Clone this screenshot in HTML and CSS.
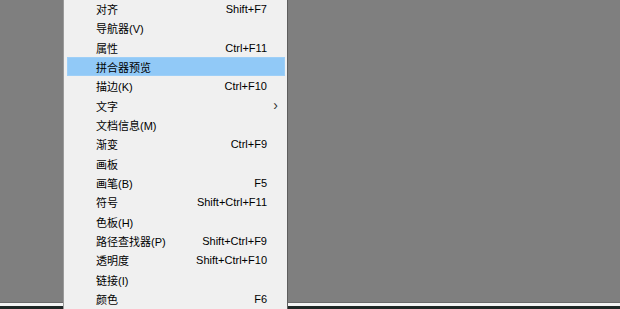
FILE: index.html
```html
<!DOCTYPE html>
<html>
<head>
<meta charset="utf-8">
<link rel="stylesheet" href="styles.css">
</head>
<body>
<div class="desktop">
  <div class="workspace"></div>
  <div class="taskbar"></div>
</div>
<ul class="menu">
  <li class="item"><span class="label">对齐</span><span class="key">Shift+F7</span></li>
  <li class="item"><span class="label">导航器(V)</span><span class="key"></span></li>
  <li class="item"><span class="label">属性</span><span class="key">Ctrl+F11</span></li>
  <li class="item active"><span class="label">拼合器预览</span><span class="key"></span></li>
  <li class="item"><span class="label">描边(K)</span><span class="key">Ctrl+F10</span></li>
  <li class="item"><span class="label">文字</span><span class="key"></span><span class="arrow">›</span></li>
  <li class="item"><span class="label">文档信息(M)</span><span class="key"></span></li>
  <li class="item"><span class="label">渐变</span><span class="key">Ctrl+F9</span></li>
  <li class="item"><span class="label">画板</span><span class="key"></span></li>
  <li class="item"><span class="label">画笔(B)</span><span class="key">F5</span></li>
  <li class="item"><span class="label">符号</span><span class="key">Shift+Ctrl+F11</span></li>
  <li class="item"><span class="label">色板(H)</span><span class="key"></span></li>
  <li class="item"><span class="label">路径查找器(P)</span><span class="key">Shift+Ctrl+F9</span></li>
  <li class="item"><span class="label">透明度</span><span class="key">Shift+Ctrl+F10</span></li>
  <li class="item"><span class="label">链接(I)</span><span class="key"></span></li>
  <li class="item"><span class="label">颜色</span><span class="key">F6</span></li>
</ul>
</body>
</html>
```
FILE: styles.css
```css
html, body {
  margin: 0;
  padding: 0;
  width: 620px;
  height: 309px;
  overflow: hidden;
  background: #808080;
  font-family: "Liberation Sans", "Noto Sans CJK SC", sans-serif;
}
.desktop {
  display: flex;
  flex-direction: column;
  height: 309px;
}
.workspace {
  flex: 1;
  background: #7f7f7f;
}
.taskbar {
  height: 6px;
  border-top: 1px solid #6a6a6a;
  background: linear-gradient(#f4f4f4 0, #f4f4f4 3px, #1f2826 3px);
}
.menu {
  position: absolute;
  left: 63px;
  top: -1px;
  width: 223px;
  margin: 0;
  padding: 0;
  list-style: none;
  background: #f0f0f0;
  border-left: 1px solid #9a9a9a;
  border-right: 1px solid #5e5e5e;
  height: 320px;
}
.item {
  display: flex;
  align-items: center;
  height: 19.33px;
  margin: 0 2px 0 3px;
  padding: 1px 18px 0 29px;
  font-size: 11px;
  color: #000;
  box-sizing: border-box;
  position: relative;
}
.item.active {
  background: #91c9f7;
  box-shadow: inset 0 0 0 1px #9ecff7;
}
.label {
  flex: 1;
}
.key {
  text-align: right;
}
.arrow {
  position: absolute;
  right: 7px;
  top: 0;
  font-size: 14px;
  line-height: 18px;
  color: #333;
}
```
